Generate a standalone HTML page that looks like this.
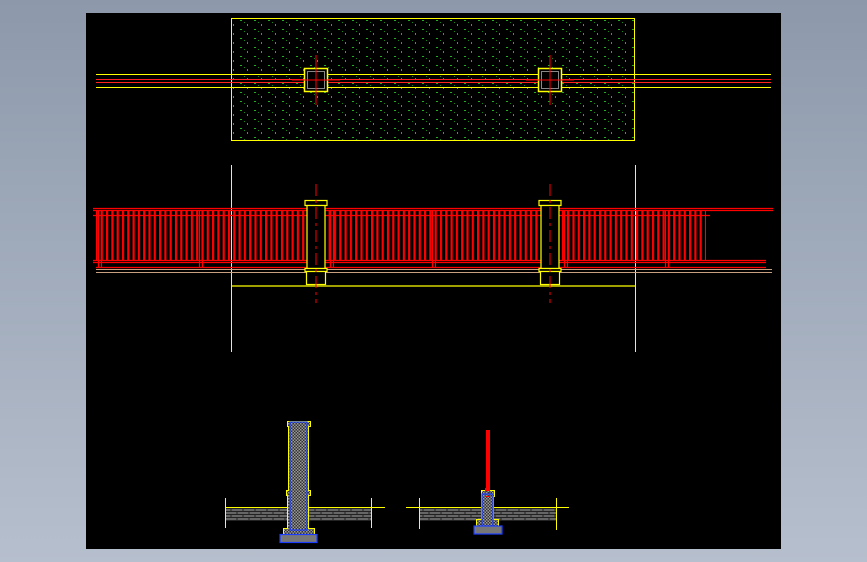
<!DOCTYPE html>
<html><head><style>
html,body{margin:0;padding:0;width:867px;height:562px;overflow:hidden;background:linear-gradient(#8d99ab,#b6bfcd);}
svg{position:absolute;left:0;top:0}
</style></head><body>
<svg width="867" height="562" viewBox="0 0 867 562" xmlns="http://www.w3.org/2000/svg">
<defs>
<pattern id="dots" width="14" height="9" patternUnits="userSpaceOnUse">
<rect x="2" y="2" width="2" height="1" fill="#22b022"/><rect x="9" y="6" width="1" height="2" fill="#22b022"/><rect x="6" y="4" width="1" height="1" fill="#188818"/>
</pattern>
<pattern id="bal" width="5.3" height="10" patternUnits="userSpaceOnUse">
<rect x="0" y="0" width="2.2" height="10" fill="#ff0000"/>
</pattern>
<pattern id="hatch" width="3" height="3" patternUnits="userSpaceOnUse">
<rect width="3" height="3" fill="#333"/><rect width="1.5" height="1.5" fill="#999"/><rect x="1.5" y="1.5" width="1.5" height="1.5" fill="#999"/>
</pattern>
<pattern id="brick" width="12" height="6" patternUnits="userSpaceOnUse">
<rect width="12" height="6" fill="#666"/><path d="M0 1.5H12M0 4.5H12M3 0V1.5M9 1.5V4.5M3 4.5V6" stroke="#222" stroke-width="1" fill="none"/>
</pattern>
</defs>
<rect x="86" y="13" width="695" height="536" fill="#000"/>

<rect x="231.5" y="18.5" width="403" height="122" fill="url(#dots)" stroke="#ffff00"/>
<line x1="96" y1="74.5" x2="771" y2="74.5" stroke="#ffff00"/>
<line x1="96" y1="79.5" x2="771" y2="79.5" stroke="#ff2020"/>
<line x1="96" y1="82.5" x2="771" y2="82.5" stroke="#ff2020"/>
<line x1="96" y1="87.5" x2="771" y2="87.5" stroke="#ffff00"/>
<g>
<rect x="304.5" y="68.5" width="23" height="23" fill="#000" stroke="#ffff00" stroke-width="1.5"/>
<rect x="307.5" y="71.5" width="17" height="17" fill="none" stroke="#888"/>
<line x1="316" y1="55" x2="316" y2="105" stroke="#ff0000"/><line x1="292" y1="80" x2="340" y2="80" stroke="#ff0000"/>
<rect x="538.5" y="68.5" width="23" height="23" fill="#000" stroke="#ffff00" stroke-width="1.5"/>
<rect x="541.5" y="71.5" width="17" height="17" fill="none" stroke="#888"/>
<line x1="550" y1="55" x2="550" y2="105" stroke="#ff0000"/><line x1="526" y1="80" x2="574" y2="80" stroke="#ff0000"/>
</g>

<line x1="231.5" y1="165" x2="231.5" y2="352" stroke="#ffff00"/>
<line x1="635.5" y1="165" x2="635.5" y2="352" stroke="#ffff00"/>
<rect x="96" y="211" width="610" height="50" fill="url(#bal)"/>
<g stroke="#ff0000" stroke-width="1.2" fill="none">
<line x1="93" y1="208.5" x2="773" y2="208.5"/><line x1="93" y1="210.5" x2="773" y2="210.5"/>
<line x1="93" y1="215.5" x2="710" y2="215.5"/>
<line x1="93" y1="260.5" x2="766" y2="260.5"/><line x1="93" y1="262.5" x2="766" y2="262.5"/>
<line x1="96" y1="267.5" x2="766" y2="267.5"/>
<path d="M98.5 210V268M101.5 210V268M199.5 210V268M202.5 210V268M330.5 210V268M333.5 210V268M432.5 210V268M435.5 210V268M564.5 210V268M567.5 210V268M665.5 210V268M668.5 210V268"/>
</g>
<line x1="96" y1="269.5" x2="772" y2="269.5" stroke="#c8a080"/>
<line x1="96" y1="272.5" x2="772" y2="272.5" stroke="#c8a080"/>
<g fill="#000" stroke="#ffff00" stroke-width="1.2">
<rect x="305" y="200.5" width="22" height="5"/><rect x="307" y="205.5" width="18" height="63"/><rect x="305" y="268.5" width="22" height="3"/><rect x="306.5" y="271.5" width="19" height="13"/>
<rect x="539" y="200.5" width="22" height="5"/><rect x="541" y="205.5" width="18" height="63"/><rect x="539" y="268.5" width="22" height="3"/><rect x="540.5" y="271.5" width="19" height="13"/>
</g>
<line x1="231" y1="286" x2="636" y2="286" stroke="#ffff00" stroke-width="1.2"/>
<line x1="316" y1="184" x2="316" y2="303" stroke="#ff0000" stroke-dasharray="12,4,3,4"/>
<line x1="550" y1="184" x2="550" y2="303" stroke="#ff0000" stroke-dasharray="12,4,3,4"/>

<rect x="226" y="508" width="145" height="13" fill="url(#brick)"/>
<line x1="226" y1="507.5" x2="385" y2="507.5" stroke="#ffff00"/>
<line x1="225.5" y1="498" x2="225.5" y2="528" stroke="#ffff00"/>
<line x1="371.5" y1="498" x2="371.5" y2="528" stroke="#ffff00"/>
<path d="M287.5 421.5H310.5V426.5H308.5V490.5H310.5V495.5H308.5V528.5H314.5V535.5H283.5V528.5H287.5V495.5H286.5V490.5H288.5V426.5H287.5Z" fill="url(#hatch)" stroke="#ffff00"/>
<rect x="290" y="422" width="17" height="108" fill="url(#hatch)" stroke="#1a3cff" stroke-width="1.2"/>
<rect x="280" y="534.5" width="37" height="8" fill="#777" stroke="#1a3cff" stroke-width="1.2"/>

<rect x="419" y="508" width="137" height="13" fill="url(#brick)"/>
<line x1="406" y1="507.5" x2="569" y2="507.5" stroke="#ffff00"/>
<line x1="419.5" y1="498" x2="419.5" y2="529" stroke="#ffff00"/>
<line x1="556.5" y1="498" x2="556.5" y2="530" stroke="#ffff00"/>
<path d="M481.5 490.5H494.5V496.5H493.5V519.5H498.5V526.5H476.5V519.5H481.5Z" fill="url(#hatch)" stroke="#ffff00"/>
<rect x="482" y="494" width="11" height="32" fill="url(#hatch)" stroke="#1a3cff" stroke-width="1.2"/>
<rect x="474" y="526" width="28" height="8" fill="#777" stroke="#1a3cff" stroke-width="1.2"/>
<rect x="486.5" y="430.5" width="3" height="60" fill="#ff0000" stroke="#ff0000"/>
<rect x="485.5" y="488.5" width="4" height="8" fill="none" stroke="#ff0000"/>
</svg>
</body></html>
